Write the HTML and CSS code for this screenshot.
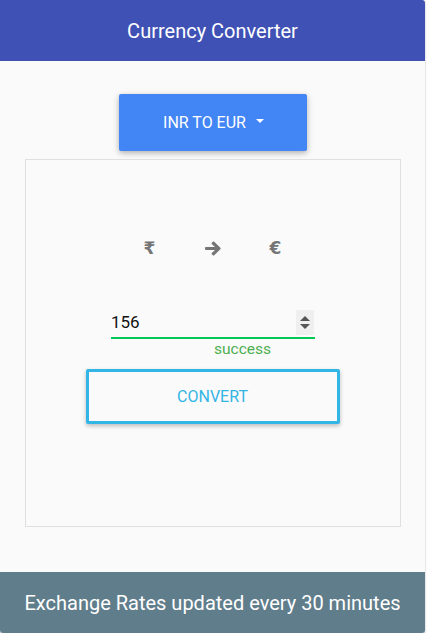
FILE: index.html
```html
<!DOCTYPE html>
<html>
<head>
<meta charset="utf-8">
<link rel="stylesheet" href="styles.css">
</head>
<body>
<div class="card">
  <header class="head">Currency Converter</header>
  <main class="content">
    <button class="dropdown">INR TO EUR <span class="caret"></span></button>
    <section class="panel">
      <div class="icons">
        <span class="cur">₹</span>
        <span class="cur"><svg class="arrow" width="16" height="15" viewBox="0 0 448 400"><path d="M190 40 L222 8 Q240 -8 258 8 L430 180 Q448 200 430 220 L258 392 Q240 408 222 392 L190 360 Q172 342 190 324 L280 240 L24 240 Q0 240 0 216 L0 184 Q0 160 24 160 L280 160 L190 76 Q172 58 190 40 Z" fill="#757575"/></svg></span>
        <span class="cur">€</span>
      </div>
      <div class="field">
        <div class="input">
          <span class="value">156</span>
          <span class="spin"><span class="up"></span><span class="down"></span></span>
        </div>
        <div class="hint">success</div>
      </div>
      <button class="convert">CONVERT</button>
    </section>
  </main>
  <footer class="foot">Exchange Rates updated every 30 minutes</footer>
</div>
</body>
</html>
```
FILE: styles.css
```css
html, body { margin: 0; padding: 0; background: #ffffff; }
body { font-family: Roboto, "Liberation Sans", sans-serif; }
.card {
  width: 425px;
  height: 633px;
  display: flex;
  flex-direction: column;
  background: #fafafa;
  border-radius: 0 3px 3px 3px;
  box-shadow: 0 1px 2px rgba(0,0,0,0.35);
  overflow: hidden;
}
.head {
  height: 61px;
  flex: none;
  background: #3f51b5;
  color: #fff;
  font-size: 20px;
  display: flex;
  align-items: center;
  justify-content: center;
}
.content {
  flex: 1;
  display: flex;
  flex-direction: column;
  align-items: center;
  padding-top: 33px;
}
.dropdown {
  width: 188px;
  height: 57px;
  border: none;
  border-radius: 2px;
  background: #4285f4;
  color: #fff;
  font-family: Roboto, sans-serif;
  font-size: 16px;
  font-weight: 400;
  box-shadow: 0 2px 5px rgba(0,0,0,0.2), 0 2px 8px rgba(0,0,0,0.12);
  display: flex;
  align-items: center;
  justify-content: center;
  gap: 10px;
  padding: 0;
  padding-left: 2px;
}
.caret {
  width: 0; height: 0;
  border-left: 4.5px solid transparent;
  border-right: 4.5px solid transparent;
  border-top: 4.5px solid #fff;
  margin-top: -4px;
}
.panel {
  margin-top: 8px;
  width: 374px;
  height: 366px;
  border: 1px solid #e0e0e0;
  display: flex;
  flex-direction: column;
  align-items: center;
  box-sizing: content-box;
}
.icons {
  margin-top: 76px;
  display: flex;
  align-items: center;
  gap: 43px;
  color: #757575;
  height: 24px;
}
.cur {
  width: 20px;
  display: flex;
  justify-content: center;
  font-family: "DejaVu Sans", sans-serif;
  font-weight: bold;
  font-size: 17px;
}
.arrow { display: block; }
.field {
  margin-top: 47px;
  width: 204px;
  display: flex;
  flex-direction: column;
  margin-left: 1px;
}
.input {
  height: 30px;
  border-bottom: 2px solid #00c853;
  display: flex;
  align-items: center;
  justify-content: space-between;
}
.value {
  font-size: 17px;
  color: #111;
  margin-top: -1px;
}
.spin {
  width: 18px;
  height: 25px;
  background: #efefef;
  display: flex;
  flex-direction: column;
  align-items: center;
  justify-content: center;
  gap: 3px;
  margin-right: 1px;
  margin-top: 1px;
}
.up, .down { width: 0; height: 0; border-left: 5px solid transparent; border-right: 5px solid transparent; }
.up { border-bottom: 5px solid #555; }
.down { border-top: 5px solid #555; }
.hint {
  color: #4caf50;
  font-size: 15.5px;
  text-align: center;
  padding-left: 59px;
  margin-top: 2px;
  line-height: 17px;
}
.convert {
  margin-top: 11px;
  width: 254px;
  height: 55px;
  border: 3px solid #33b5e5;
  background: #fafafa;
  color: #33b5e5;
  font-family: Roboto, sans-serif;
  font-size: 16px;
  border-radius: 2px;
  box-shadow: 0 2px 4px rgba(0,0,0,0.25);
}
.foot {
  height: 61px;
  flex: none;
  margin-top: auto;
  background: #607d8b;
  color: #fff;
  font-size: 20px;
  display: flex;
  align-items: center;
  justify-content: center;
}
```
